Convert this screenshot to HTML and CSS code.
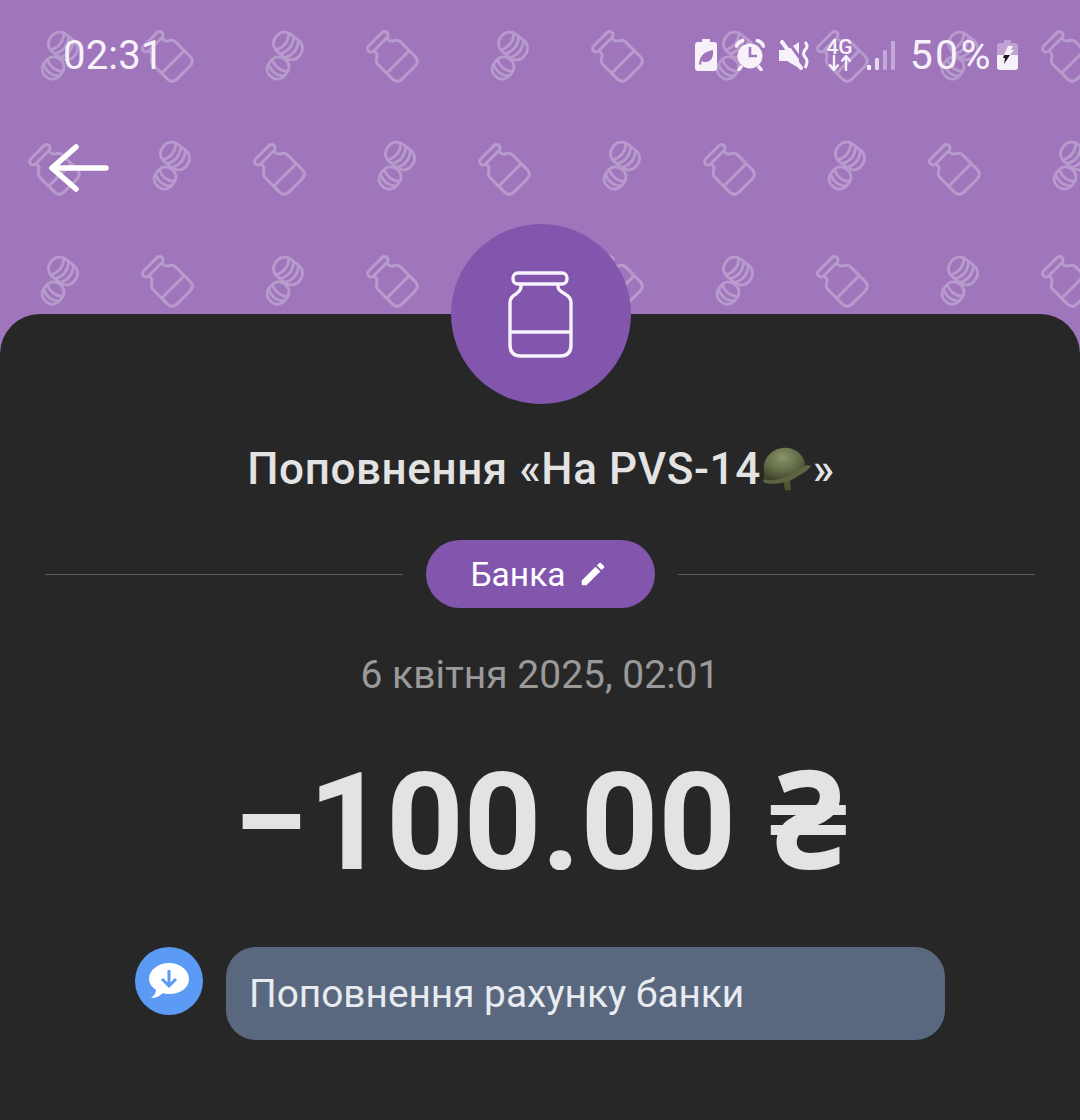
FILE: index.html

```html
<!DOCTYPE html>
<html>
<head>
    <title>Банка</title>
    <link rel="stylesheet" href="styles.css">
</head>
<body>
    <div class="header">
        <svg class="pattern" width="1080" height="354">
            <defs>
                <g id="jarMark" fill="none" stroke="#b89bcd" stroke-width="3" stroke-linejoin="round">
                    <rect x="-13" y="-25" width="26" height="7" rx="3.5"/>
                    <path d="M-9 -18 V-15 Q-9 -13 -12 -11 Q-16 -9 -16 -5 V15 Q-16 22 -9 22 H9 Q16 22 16 15 V-5 Q16 -9 12 -11 Q9 -13 9 -15 V-18"/>
                    <path d="M-16 7 H16"/>
                </g>
                <g id="coinsMark" fill="none" stroke="#b89bcd" stroke-width="2.8" stroke-linecap="round">
                    <g transform="translate(-7 13) rotate(128)">
                        <rect x="-11" y="-10" width="22" height="20" rx="9"/>
                        <path d="M-3 -9.5 Q3 0 -3 9.5 M3 -9.5 Q9 0 3 9.5"/>
                    </g>
                    <g transform="translate(3 -9) rotate(38)">
                        <rect x="-15" y="-11" width="30" height="22" rx="10" fill="#9f75bb"/>
                        <path d="M-7 -10.5 Q0 0 -7 10.5 M-1 -10.5 Q6 0 -1 10.5 M5 -10.5 Q12 0 5 10.5"/>
                    </g>
                </g>
                <pattern id="tile" width="225" height="225" patternUnits="userSpaceOnUse">
                    <use href="#coinsMark" transform="translate(60 55)"/>
                    <use href="#jarMark" transform="translate(168 57) rotate(-45)"/>
                    <use href="#jarMark" transform="translate(55 170) rotate(-45)"/>
                    <use href="#coinsMark" transform="translate(172 165)"/>
                </pattern>
            </defs>
            <rect width="1080" height="354" fill="url(#tile)"/>
        </svg>

        <div class="status-bar">
            <span class="time">02:31</span>
            <div class="status-icons">
                <svg class="leaf" width="22" height="32" viewBox="0 0 22 32">
                    <path fill="#f7f1fa" d="M7 0 H15 V3 H19 Q22 3 22 6 V29 Q22 32 19 32 H3 Q0 32 0 29 V6 Q0 3 3 3 H7 Z"/>
                    <path fill="#9f75bb" d="M4 25 Q5 13 18 11 Q19 23 10 23 Q8 23 7 22 Q6 24 6 26 Z"/>
                </svg>
                <svg class="alarm" width="30" height="32" viewBox="0 0 30 32">
                    <circle cx="15" cy="17" r="12.5" fill="#f7f1fa"/>
                    <path d="M15 8 V17 H22" fill="none" stroke="#9f75bb" stroke-width="2.6"/>
                    <path d="M1.5 7 Q3 3 7.5 1.5 M22.5 1.5 Q27 3 28.5 7 M6 28 L4 30.5 M24 28 L26 30.5" fill="none" stroke="#f7f1fa" stroke-width="3.6" stroke-linecap="round"/>
                </svg>
                <svg class="mute" width="30" height="30" viewBox="0 0 30 30">
                    <path fill="#f7f1fa" d="M0 10 H8 L20 2 V28 L8 21 H0 Z"/>
                    <path d="M7 -1 L26 25" stroke="#9f75bb" stroke-width="3"/>
                    <path d="M3 2 L22 28" stroke="#f7f1fa" stroke-width="4" stroke-linecap="round"/>
                    <path d="M26 2 Q30 6 26 10 Q23 14 26 17 Q30 21 26 28" fill="none" stroke="#f7f1fa" stroke-width="3"/>
                </svg>
                <div class="net">
                    <span class="net-label">4G</span>
                    <svg width="26" height="16" viewBox="0 0 26 16">
                        <path d="M7 0 V14 M2.5 9.5 L7 15 L11.5 9.5 M19 16 V2 M14.5 6.5 L19 1 L23.5 6.5" fill="none" stroke="#f7f1fa" stroke-width="2.4"/>
                    </svg>
                </div>
                <svg class="signal" width="28" height="29" viewBox="0 0 28 29">
                    <rect x="0" y="24" width="4" height="5" rx="1" fill="#f7f1fa"/>
                    <rect x="8" y="17" width="4" height="12" rx="1" fill="#e5d8ee"/>
                    <rect x="16" y="9" width="4" height="20" rx="1" fill="#c3a9d6"/>
                    <rect x="24" y="0" width="4" height="29" rx="1" fill="#c3a9d6"/>
                </svg>
                <span class="battery-text">50%</span>
                <svg class="battery" width="21" height="30" viewBox="0 0 21 30">
                    <path fill="#bfa2d3" d="M7 0 H14 V3 H18 Q21 3 21 6 V16 H0 V6 Q0 3 3 3 H7 Z"/>
                    <path fill="#f7f1fa" d="M0 15 H21 V27 Q21 30 18 30 H3 Q0 30 0 27 Z"/>
                    <path fill="#f7f1fa" d="M11 6 L16 6 L14 10 H17 L13 15 H7 Z"/>
                    <path fill="#1f1a22" d="M7 15 H13 L7 24 L8 18 H6 Z"/>
                </svg>
            </div>
        </div>

        <svg class="back" width="62" height="50" viewBox="0 0 62 50">
            <path d="M27 4 L3 25 L27 46 M3 25 H57" fill="none" stroke="#fff" stroke-width="5.6" stroke-linecap="round" stroke-linejoin="round"/>
        </svg>
    </div>

    <div class="sheet">
        <div class="avatar">
            <svg width="70" height="90" viewBox="0 0 70 90" fill="none" stroke="#f8f2fb" stroke-width="3.4" stroke-linejoin="round">
                <rect x="7" y="4" width="54" height="11" rx="5"/>
                <path d="M15 15 V18 Q15 21 10 25 Q4 28 4 34 V76 Q4 87 15 87 H54 Q65 87 65 76 V34 Q65 28 59 25 Q52 21 52 18 V15"/>
                <path d="M4 63 H65"/>
            </svg>
        </div>

        <h1 class="title">Поповнення «На PVS-14<svg class="helmet" width="52" height="46" viewBox="0 0 54 46">
                <defs>
                    <radialGradient id="dome" cx="0.45" cy="0.3" r="0.7">
                        <stop offset="0" stop-color="#8a946a"/>
                        <stop offset="0.6" stop-color="#616a45"/>
                        <stop offset="1" stop-color="#3e442b"/>
                    </radialGradient>
                </defs>
                <path d="M23 34 L25 45 H31 L30 33 Z" fill="#4e5534"/>
                <path d="M3 26 C1 12 12 1 25 1 C36 1 44 8 46 18 L38 26 C28 33 12 36 3 35 Z" fill="url(#dome)"/>
                <path d="M2 34 C14 37 30 31 38 24 C42 20 48 18 52 20 C48 26 42 28 36 32 C26 38 10 40 3 37 Z" fill="#5c6440"/>
            </svg>»</h1>

        <div class="category-row">
            <div class="line"></div>
            <div class="pill">
                <span>Банка</span>
                <svg width="30" height="30" viewBox="0 0 24 24">
                    <path fill="#fff" d="M3 17.25V21h3.75L17.81 9.94l-3.75-3.75L3 17.25zM20.71 7.04a1 1 0 0 0 0-1.41l-2.34-2.34a1 1 0 0 0-1.41 0l-1.83 1.83 3.75 3.75 1.83-1.83z"/>
                </svg>
            </div>
            <div class="line"></div>
        </div>

        <div class="date">6 квітня 2025, 02:01</div>

        <div class="amount">−100.00 ₴</div>

        <div class="comment-row">
            <div class="comment-icon">
                <svg width="40" height="38" viewBox="0 0 40 38">
                    <path fill="#fff" d="M20 1 C31 1 40 8 40 17 C40 26 31 32 20 32 C18 32 16 32 14 31 C11 34 7 36 2 36 C5 34 7 31 7 28 C3 25 0 21 0 17 C0 8 9 1 20 1 Z"/>
                    <path d="M20 8 V23 M13 17 L20 24 L27 17" fill="none" stroke="#5b9bf5" stroke-width="3"/>
                </svg>
            </div>
            <div class="bubble">Поповнення рахунку банки</div>
        </div>
    </div>
</body>
</html>
```

FILE: styles.css

```css
html, body {
    margin: 0;
    padding: 0;
}
body {
    width: 1080px;
    height: 1120px;
    overflow: hidden;
    background: #9f75bb;
    font-family: Roboto, "Noto Sans", sans-serif;
}
.header {
    position: relative;
    height: 314px;
}
.pattern {
    position: absolute;
    top: 0;
    left: 0;
}
.status-bar {
    position: relative;
    display: flex;
    justify-content: space-between;
    align-items: center;
    height: 110px;
    padding: 0 62px 0 63px;
    color: #f7f1fa;
}
.time {
    font-size: 40px;
    letter-spacing: 0.2px;
}
.status-icons {
    display: flex;
    align-items: center;
}
.status-icons svg {
    display: block;
}
.leaf {
    margin-right: 18px;
}
.alarm {
    margin-right: 14px;
}
.mute {
    margin-right: 17px;
}
.net {
    display: flex;
    flex-direction: column;
    align-items: center;
    margin-right: 14px;
}
.net-label {
    font-size: 21px;
    font-weight: 500;
    line-height: 16px;
}
.signal {
    margin-right: 15px;
}
.battery-text {
    font-size: 41px;
    letter-spacing: 2.4px;
    margin-right: 4px;
}
.back {
    position: relative;
    display: block;
    margin: 33px 0 0 49px;
}
.sheet {
    position: relative;
    display: flex;
    flex-direction: column;
    align-items: center;
    height: 806px;
    background: #272727;
    border-radius: 40px 40px 0 0;
}
.avatar {
    display: flex;
    justify-content: center;
    align-items: center;
    width: 180px;
    height: 180px;
    margin: -90px 0 0 2px;
    border-radius: 50%;
    background: #8356ae;
}
.title {
    display: flex;
    align-items: center;
    margin: 41px 0 0 2px;
    height: 48px;
    font-size: 44px;
    font-weight: 500;
    letter-spacing: 0.6px;
    color: #e3e3e3;
}
.helmet {
    display: block;
    margin-top: -1px;
}
.category-row {
    display: flex;
    align-items: center;
    width: 990px;
    margin-top: 47px;
    gap: 23px;
}
.line {
    flex: 1;
    height: 1px;
    background: #5c5c5c;
}
.pill {
    display: flex;
    align-items: center;
    gap: 12px;
    height: 68px;
    padding: 0 47px 0 45px;
    border-radius: 34px;
    background: #8356ae;
    color: #fff;
    font-size: 33.5px;
}
.date {
    margin-top: 44px;
    font-size: 39px;
    line-height: 46px;
    color: #9a9a9a;
}
.amount {
    margin-top: 50px;
    font-size: 136px;
    font-weight: 700;
    letter-spacing: -0.3px;
    line-height: 150px;
    color: #e3e3e3;
}
.comment-row {
    display: flex;
    align-items: flex-start;
    width: 810px;
    margin-top: 49px;
    gap: 23px;
}
.comment-icon {
    display: flex;
    justify-content: center;
    align-items: center;
    width: 68px;
    height: 68px;
    border-radius: 50%;
    background: #5b9bf5;
}
.bubble {
    width: 719px;
    height: 93px;
    box-sizing: border-box;
    padding: 0 23px;
    border-radius: 30px;
    background: #5a687f;
    color: #e8ebf0;
    font-size: 38.8px;
    line-height: 93px;
}
```
